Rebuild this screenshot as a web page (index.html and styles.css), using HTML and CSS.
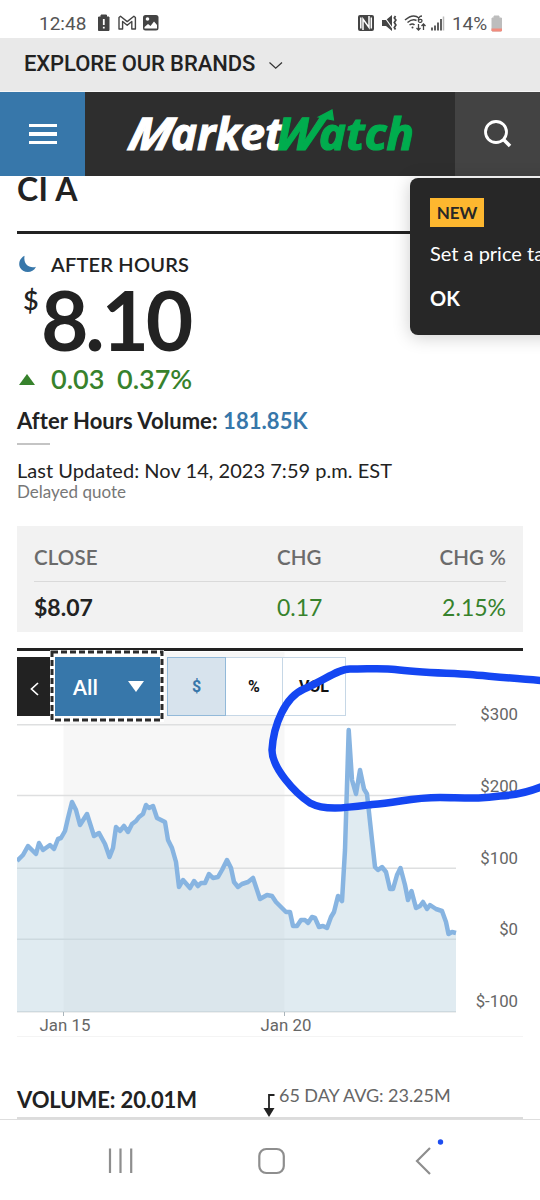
FILE: index.html
```html
<!DOCTYPE html>
<html lang="en">
<head>
<meta charset="utf-8">
<title>MarketWatch</title>
<link rel="stylesheet" href="styles.css">
</head>
<body>
<div class="screen">
  <div class="status">
    <span class="clock">12:48</span>
    <svg class="status-left" width="64" height="20" viewBox="96 13 64 20">
      <path d="M98.500 17h2.500v-2h5.500v2h2.500v13.500h-10.500z" fill="#444" stroke="#444" stroke-linejoin="round"/>
      <path d="M103.800 19v6m0 1.800v1.800" stroke="#fff" stroke-width="1.800"/>
      <path d="M119 29V17.500l1.500-1.200 6.700 5.300 6.700-5.300 1.500 1.200V29h-3.600v-7.500l-4.600 3.700-4.600-3.700V29z" fill="none" stroke="#444" stroke-width="1.400" stroke-linejoin="round"/>
      <rect x="143" y="15" width="15.500" height="15.500" rx="2.500" fill="#444"/>
      <circle cx="147.500" cy="19" r="1.800" fill="#fff"/>
      <path d="M144.500 28.500V27l3.500-3 2.500 2 3.500-4.500 3 3.500v3.500z" fill="#fff"/>
    </svg>
    <svg class="status-right" width="90" height="20" viewBox="357 13 90 20">
      <rect x="358" y="15" width="16" height="16" rx="2" fill="#444"/>
      <path d="M363 30V19l6 8.500V16M360.800 17.500v11M371.300 17.500v11" fill="none" stroke="#fff" stroke-width="1.500"/>
      <path d="M382 20h4l6-5v16l-6-5h-4z" fill="#444"/><path d="M383 15l10 14" stroke="#fff" stroke-width="1.200"/>
      <path d="M395.500 16l-1.200 2 1.600 2-1.600 2.500 1.600 2.500-1.600 2.500 1.200 2" fill="none" stroke="#444" stroke-width="1.700"/>
      <path d="M405 20q8-7 14-2M407.500 22.500q5-4 9-2M409.500 25q3-2 5 0" fill="none" stroke="#444" stroke-width="1.500"/>
      <circle cx="412.500" cy="27.500" r="1" fill="#444"/>
      <path d="M422 16c-3 0-4 3-3.500 5.500 1 1.500 3.500 1 3.500-.8 0-1.700-2.500-2-3.500-.2" fill="none" stroke="#444" stroke-width="1.300"/>
      <path d="M418.500 24v6m-2-2 2 2 2-2M423.500 30v-6m-2 2 2-2 2 2" fill="none" stroke="#444" stroke-width="1.300"/>
      <path d="M432 30.500v-3M435 30.500v-5M438 30.500v-8M441 30.500V19" stroke="#444" stroke-width="1.700"/>
      <path d="M443.500 30.500v-14" stroke="#bbb" stroke-width="1.500"/>
    </svg>
    <span class="charge">14%</span>
    <svg class="battery" width="12" height="17" viewBox="0 0 12 17"><path d="M1 3h2V1h5v2h2.500v13H1z" fill="#bdbdbd" stroke="#bdbdbd" stroke-linejoin="round"/><path d="M.5 13.500H11V15.500l-1 1H1.500l-1-1z" fill="#f28b7d"/></svg>
  </div>
  <div class="brands">
    <span class="brands-label">EXPLORE OUR BRANDS</span>
    <svg class="brands-chevron" width="16" height="10" viewBox="0 0 16 10"><path d="M1.500 1.500 7.700 7.300 14 1.500" fill="none" stroke="#333" stroke-width="1.200"/></svg>
  </div>
  <header class="header">
    <div class="menu"><i></i><i></i><i></i></div>
    <svg class="logo" width="370" height="84" viewBox="85 92 370 84">
      <g class="logo-text white">
        <text transform="translate(126 150) skewX(-14)" textLength="43" lengthAdjust="spacingAndGlyphs">M</text>
        <text x="171" y="150" textLength="112" lengthAdjust="spacingAndGlyphs">arket</text>
      </g>
      <g class="logo-text green">
        <text transform="translate(273 150) skewX(-12)" textLength="43" lengthAdjust="spacingAndGlyphs">W</text>
        <text x="319" y="150" textLength="95" lengthAdjust="spacingAndGlyphs">atch</text>
        <path d="M318.500 117 332 110 333.500 120z"/>
      </g>
    </svg>
    <div class="search">
      <svg width="30" height="30" viewBox="0 0 30 30"><circle cx="13" cy="13" r="10.500" fill="none" stroke="#fff" stroke-width="2.800"/><path d="M20.500 20.500 27 27" stroke="#fff" stroke-width="3.500"/></svg>
    </div>
  </header>
  <main class="main">
    <h1 class="name">CI A</h1>
    <div class="rule rule-top"></div>
    <div class="session">
      <svg class="moon" width="20" height="20" viewBox="0 0 20 20"><path d="M6.500.8C1.500 3.500.2 8.500 2 12.500c2.300 5.300 12.500 6.800 16-.8C13 13.500 5 11 6.500.8z" fill="#3777aa"/></svg>
      <span class="session-label">AFTER HOURS</span>
    </div>
    <div class="price"><span class="currency">$</span><span class="amount">8.10</span></div>
    <div class="change"><i class="up"></i><span class="delta">0.03</span><span class="pct">0.37%</span></div>
    <div class="after-volume">After Hours Volume: <span class="link">181.85K</span></div>
    <div class="short-rule"></div>
    <div class="updated">Last Updated: Nov 14, 2023 7:59 p.m. EST</div>
    <div class="delayed">Delayed quote</div>
    <div class="quote">
      <div class="quote-head"><span>CLOSE</span><span>CHG</span><span>CHG %</span></div>
      <div class="quote-row"><span class="close">$8.07</span><span>0.17</span><span>2.15%</span></div>
    </div>
    <div class="rule rule-chart"></div>
    <div class="chart">
      <svg class="plot" width="506" height="386" viewBox="17 651 506 386">
        <rect x="63.500" y="652" width="221" height="360" fill="#f7f7f7"/>
        <path d="M17 724.700H456M17 795.500H456M17 868.300H456M17 939.200H456M17 1011.700H456" stroke="#dedfe0" stroke-width="1.600"/>
        <path class="area" d="M17 861L23 855 28 846 36 854 39 843 43 850 50 845 54 849 58 839 61 838 65 831 68 818 72 802 76 810 80 825 87 814 94 836 99 833 105 844 109.500 857 113 848 116 827 120 831 124 826 128 832 132 824 136 821 139 817 143 814 146 805 149 808 153 806 157 818 161 820 165 822 168 840 172 848 176 862 179 887 183 880 190 888 194 881 198 886 201 883 205 883 209 874 213 878 218 877 222 870 227 860 231 868 234 882 238 887 242 884 248 882 253 878 260 899 267 895 272 896 276 902 281 907 286 912 290 912 293 926 297 926 301 920 305 920 308 923 312 917 315 918 319 927 323 926 327 928 331 917 334 912 338 896 342 901 345 850 348.700 730 352 780 356 794 360 770 364 789 367 794 372 840 375 867 378 870 382 867 386 872 390 889 393 889 397 875 400.500 868 405 885 408 900 411.500 891 416 908 420 906 423 902 427 909 430 905 436 909 442 911 446 922 448.500 934 452 932 456 933V1012H17z"/>
        <path class="series" d="M17 861L23 855 28 846 36 854 39 843 43 850 50 845 54 849 58 839 61 838 65 831 68 818 72 802 76 810 80 825 87 814 94 836 99 833 105 844 109.500 857 113 848 116 827 120 831 124 826 128 832 132 824 136 821 139 817 143 814 146 805 149 808 153 806 157 818 161 820 165 822 168 840 172 848 176 862 179 887 183 880 190 888 194 881 198 886 201 883 205 883 209 874 213 878 218 877 222 870 227 860 231 868 234 882 238 887 242 884 248 882 253 878 260 899 267 895 272 896 276 902 281 907 286 912 290 912 293 926 297 926 301 920 305 920 308 923 312 917 315 918 319 927 323 926 327 928 331 917 334 912 338 896 342 901 345 850 348.700 730 352 780 356 794 360 770 364 789 367 794 372 840 375 867 378 870 382 867 386 872 390 889 393 889 397 875 400.500 868 405 885 408 900 411.500 891 416 908 420 906 423 902 427 909 430 905 436 909 442 911 446 922 448.500 934 452 932 456 933"/>
        <path d="M63.500 1012v4M284.500 1012v4" stroke="#aab4ba"/>
        <g class="axis" text-anchor="end">
          <text x="518" y="720">$300</text><text x="518" y="791.500">$200</text><text x="518" y="864">$100</text><text x="518" y="935">$0</text><text x="518" y="1007.300">$-100</text>
        </g>
        <g class="axis"><text x="39.500" y="1031" textLength="51">Jan 15</text><text x="260.500" y="1031" textLength="51">Jan 20</text></g>
        <path d="M17 1036.500H523" stroke="#f4f4f4"/>
      </svg>
      <div class="toolbar">
        <div class="back"><svg width="9" height="14" viewBox="0 0 9 14"><path d="M8 1 1.500 7 8 13" fill="none" stroke="#fff" stroke-width="1.700"/></svg></div>
        <div class="range"><span>All</span><i class="down"></i>
          <svg class="focus" width="114" height="72" viewBox="0 0 114 72"><rect x="2" y="2" width="110" height="68" fill="none" stroke="#fff" stroke-width="4"/><rect x="2" y="2" width="110" height="68" fill="none" stroke="#2b2b2b" stroke-width="3" stroke-dasharray="6 3"/></svg>
        </div>
        <div class="units"><span class="unit on">$</span><span class="unit">%</span><span class="unit vol">VOL</span></div>
      </div>
    </div>
    <div class="volume">
      <span class="volume-label">VOLUME: 20.01M</span>
      <svg class="marker" width="14" height="26" viewBox="0 0 14 26"><path d="M11.500 2H6v16" fill="none" stroke="#222" stroke-width="1.800"/><path d="M.5 15h11L6 24z" fill="#222"/></svg>
      <span class="avg">65 DAY AVG: 23.25M</span>
    </div>
    <div class="volume-rule"></div>
  </main>
  <nav class="nav">
    <svg width="540" height="80" viewBox="0 1120 540 80">
      <path d="M110 1148.500v24.500M120.500 1148.500v24.500M131.200 1148.500v24.500" stroke="#8e8e8e" stroke-width="2.200"/>
      <rect x="259.300" y="1149" width="24.500" height="24" rx="7" fill="none" stroke="#8e8e8e" stroke-width="2.200"/>
      <path d="M430 1148 417 1161 430 1174" fill="none" stroke="#8e8e8e" stroke-width="2.200"/>
      <circle cx="440.500" cy="1142" r="2.700" fill="#1d4df0"/>
    </svg>
  </nav>
  <div class="tip">
    <span class="tip-new">NEW</span>
    <div class="tip-text">Set a price ta</div>
    <div class="tip-ok">OK</div>
  </div>
  <svg class="ink" width="540" height="1200" viewBox="0 0 540 1200"><path d="M548 681C520 679 488 676 470 674.500S420 673 395 669.500C385 668 370 669 350 669C338 669 325 680 304 689C285 697 273.500 725 272 750C272 768 295 793 310 803C325 811 345 808 372 804.500C400 802.500 410 797.500 440 797.500C470 798 480 799 500 796C520 795 535 790 548 784"/></svg>
</div>
</body>
</html>
```
FILE: styles.css
```css
* { box-sizing: border-box; }
body { margin: 0; background: #fff; }
.screen {
  position: relative; width: 540px; height: 1200px; overflow: hidden;
  display: flex; flex-direction: column;
  font-family: Lato, "Liberation Sans", sans-serif; color: #222; white-space: nowrap;
}
svg { display: block; flex: none; }
i { display: block; flex: none; }

.status { height: 38px; padding: 8px 0 0 39px; display: flex; align-items: center; font-family: Roboto, sans-serif; font-size: 19px; color: #555; }
.clock { width: 57px; }
.status-right { margin-left: 197px; }
.charge { margin-left: 5px; width: 38px; letter-spacing: -0.1px; }
.battery { margin-left: 1px; }

.brands { height: 54px; padding-left: 24px; background: #e9e9e9; border-bottom: 1px solid #f6f6f6; display: flex; align-items: center; font-family: Roboto, sans-serif; font-weight: 500; font-size: 22px; line-height: 52px; letter-spacing: -0.1px; }
.brands-label { width: 244px; margin-top: -1px; }
.brands-chevron { margin-top: 2px; }

.header { height: 84px; display: flex; background: #2e2e2e; }
.menu { width: 85px; background: #3777aa; display: flex; flex-direction: column; align-items: center; justify-content: center; gap: 5px; }
.menu i { width: 28px; height: 3.500px; background: #fff; }
.logo-text { font-family: "Open Sans", sans-serif; font-weight: 700; font-style: italic; font-size: 45px; stroke-width: 1.200px; }
.white { fill: #fff; stroke: #fff; }
.green { fill: #00ad4e; stroke: #00ad4e; }
.search { width: 85px; background: #434343; display: flex; align-items: center; justify-content: center; }

.main { height: 944px; padding: 0 17px; }
.name { margin: 0; padding-top: 1px; font-size: 32px; font-weight: 700; line-height: 24px; letter-spacing: 0.3px; }
.rule { height: 3px; background: #222; }
.rule-top { margin-top: 30px; }
.session { margin-top: 17px; height: 25px; display: flex; align-items: center; font-size: 20px; font-weight: 600; letter-spacing: 0.2px; }
.moon { margin-left: 1px; margin-right: 13px; margin-top: 2px; }
.price { height: 86px; padding-top: 1px; display: flex; padding-left: 6px; }
.currency { width: 18px; font-size: 27px; font-weight: 600; line-height: 46px; }
.amount { font-size: 82px; font-weight: 700; line-height: 85px; letter-spacing: -3.300px; }
.change { height: 33px; display: flex; align-items: center; font-size: 27px; font-weight: 600; line-height: 31px; color: #37822c; }
.up { border: 8.500px solid transparent; border-top: 0; border-bottom: 11px solid #37822c; margin: 2px 16px 0 2px; }
.delta { width: 66px; }
.after-volume { margin-top: 13px; font-size: 22px; font-weight: 700; line-height: 25px; height: 26px; letter-spacing: 0.06px; }
.link { color: #3777aa; }
.short-rule { margin-top: 9px; height: 2px; width: 33px; background: #c4c4c4; }
.updated { margin-top: 13px; font-size: 20px; line-height: 24px; letter-spacing: 0.04px; }
.delayed { font-size: 17px; line-height: 20px; height: 19px; color: #777; }

.quote { margin-top: 25px; height: 106px; padding: 7px 17px 0; background: #f2f2f2; }
.quote-head, .quote-row { display: grid; grid-template-columns: 243px 46px 1fr; }
.quote-head { height: 49px; line-height: 48px; font-size: 20.500px; font-weight: 600; color: #6b6b6b; border-bottom: 1px solid #dadada; letter-spacing: 0.1px; }
.quote-row { line-height: 50px; font-size: 23px; color: #37822c; }
.quote span:last-child { text-align: right; }
.quote-row .close { font-weight: 700; color: #222; }

.rule-chart { margin-top: 16px; }
.chart { display: grid; height: 386px; }
.plot, .toolbar { grid-area: 1 / 1; }
.area { fill: #b8d1df; fill-opacity: 0.43; }
.series { fill: none; stroke: #87b4e1; stroke-width: 4.500; stroke-linejoin: round; }
.axis { font-family: Roboto, sans-serif; font-size: 16.800px; fill: #666; }
.toolbar { margin-top: 6px; height: 59px; display: flex; z-index: 1; }
.back { width: 34px; background: #222; display: flex; align-items: center; padding: 4px 0 0 13px; }
.range { position: relative; margin: 0 5px 0 4px; width: 107px; background: #3777aa; display: flex; align-items: center; padding-left: 18px; font-size: 20px; font-weight: 700; color: #fff; box-shadow: 0 0 0 3px #fff; }
.range span { width: 55px; letter-spacing: 0.4px; }
.down { border: 8.500px solid transparent; border-bottom: 0; border-top: 11px solid #fff; }
.focus { position: absolute; left: -5px; top: -7px; }
.units { display: flex; font-family: Roboto, sans-serif; font-size: 16px; font-weight: 700; color: #111; line-height: 58px; }
.unit { width: 57px; text-align: center; background: #fff; border: 1px solid #c6d7e6; border-left-width: 0; }
.unit.on { width: 59px; background: #d7e3ed; color: #3777aa; border: 1px solid #92b9d9; }
.unit.vol { width: 63px; }

.volume { margin-top: 51px; height: 29px; display: flex; }
.volume-label { width: 246px; font-size: 22px; font-weight: 700; line-height: 24px; letter-spacing: -0.1px; }
.marker { margin-top: 5px; width: 14px; }
.avg { margin-left: 2px; font-size: 18px; line-height: 15px; color: #666; letter-spacing: -0.04px; }
.volume-rule { height: 3px; background: #dcdcdc; }

.nav { height: 80px; box-shadow: 0 -1px 0 #dedede; background: #fff; }

.tip { position: absolute; left: 410px; top: 178px; width: 160px; height: 157px; padding: 20px; border-radius: 8px; background: #272727; color: #fff; box-shadow: 0 2px 18px rgba(0,0,0,.2); }
.tip-new { display: block; width: 54px; height: 29px; text-align: center; line-height: 29px; font-size: 17px; font-weight: 700; color: #272727; background: #fdb72f; }
.tip-text { margin-top: 14px; font-size: 20px; line-height: 25px; }
.tip-ok { margin-top: 20px; font-size: 20px; font-weight: 700; line-height: 25px; }

.ink { position: absolute; z-index: 2; left: 0; top: 0; fill: none; stroke: #1446f2; stroke-width: 7.500; }
```
